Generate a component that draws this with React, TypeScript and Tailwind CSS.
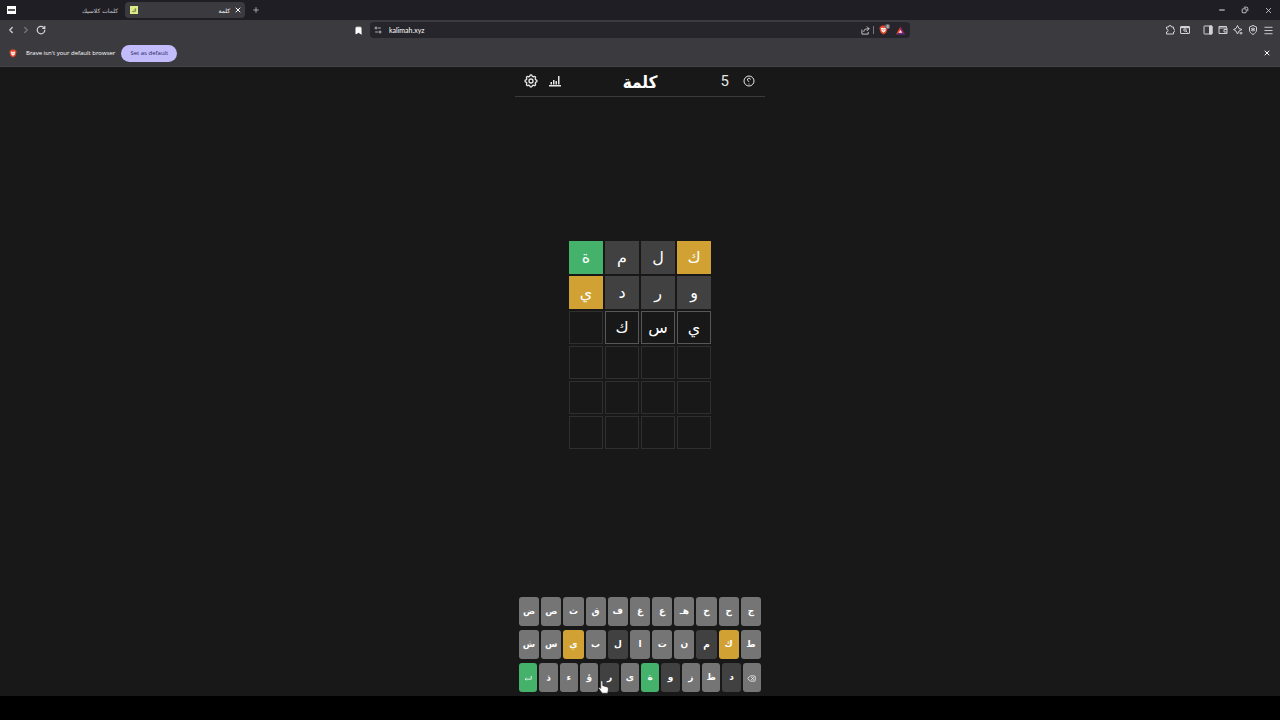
import { ReactNode } from "react";
import {
  Bookmark,
  ChevronLeft,
  ChevronRight,
  Delete,
  Menu,
  Minus,
  Plus,
  RotateCw,
  X,
} from "lucide-react";
import { HiOutlineCog } from "react-icons/hi";

type Status = "correct" | "present" | "absent" | "typed" | "empty";

interface Letter {
  char: string;
  status: Status;
}

const tileColors: Record<Status, string> = {
  correct: "bg-[#44b26b]",
  present: "bg-[#d1a233]",
  absent: "bg-[#414142]",
  typed: "border border-[#565758]",
  empty: "border border-[#2f2f30]",
};

// Rows are listed in reading order, the board itself is rtl
const guesses: Letter[][] = [
  [
    { char: "ك", status: "present" },
    { char: "ل", status: "absent" },
    { char: "م", status: "absent" },
    { char: "ة", status: "correct" },
  ],
  [
    { char: "و", status: "absent" },
    { char: "ر", status: "absent" },
    { char: "د", status: "absent" },
    { char: "ي", status: "present" },
  ],
  [
    { char: "ي", status: "typed" },
    { char: "س", status: "typed" },
    { char: "ك", status: "typed" },
    { char: "", status: "empty" },
  ],
];

const emptyRow: Letter[] = Array.from({ length: 4 }, () => ({ char: "", status: "empty" }));
const board = [...guesses, emptyRow, emptyRow, emptyRow];

const keyRows = [
  ["ج", "ح", "خ", "هـ", "ع", "غ", "ف", "ق", "ث", "ص", "ض"],
  ["ط", "ك", "م", "ن", "ت", "ا", "ل", "ب", "ي", "س", "ش"],
  ["delete", "د", "ظ", "ز", "و", "ة", "ى", "ر", "ؤ", "ء", "ذ", "enter"],
];

const keyColors: Record<string, string> = {
  "ك": "bg-[#d1a233]",
  "ي": "bg-[#d1a233]",
  "ة": "bg-[#44b26b]",
  enter: "bg-[#44b26b]",
  "م": "bg-[#414142]",
  "ل": "bg-[#414142]",
  "د": "bg-[#414142]",
  "و": "bg-[#414142]",
  "ر": "bg-[#414142]",
};

function IconButton({ label, className = "", children }: { label: string; className?: string; children: ReactNode }) {
  return (
    <button type="button" aria-label={label} className={`flex shrink-0 items-center justify-center ${className}`}>
      {children}
    </button>
  );
}

function LineIcon({ className = "size-[10px]", children }: { className?: string; children: ReactNode }) {
  return (
    <svg viewBox="0 0 20 20" className={className} fill="none" stroke="currentColor" strokeWidth="2" aria-hidden="true">
      {children}
    </svg>
  );
}

function BraveLogo({ className }: { className: string }) {
  return (
    <svg viewBox="0 0 20 22" className={className} aria-hidden="true">
      <path d="M6 1h8l2 2 2 1 1 4-3 9-6 4-6-4L1 8l1-4 2-1z" fill="#e8472b" />
      <path d="M4 7l3-1 3 1 3-1 3 1-2 4 1 2-3 2-2 2-2-2-3-2 1-2z" fill="#fff" />
      <path d="M7 9l2 1M13 9l-2 1M10 10v3" stroke="#e8472b" strokeWidth="1.2" />
    </svg>
  );
}

function TabStrip() {
  return (
    <header className="flex h-5 items-center bg-[#1f1e24] text-[#c8c8cc]">
      <div className="flex w-[125px] items-center justify-between pr-[7px] pl-[7px]">
        <span className="flex h-2 w-[9px] items-center justify-center bg-white">
          <span className="h-[2px] w-[7px] bg-[#555]" />
        </span>
        <span dir="rtl" className="text-[6px]">كلمات كلاسيك</span>
      </div>
      <div className="flex h-4 w-[120px] items-center rounded bg-[#3b3a3f] pr-[3px] pl-[5px] text-white">
        <span className="flex size-2 items-center justify-center bg-[#dfeb8b] text-[5px] leading-none font-bold text-[#54702a]">ك</span>
        <span dir="rtl" className="ml-auto text-[6px]">كلمة</span>
        <IconButton label="Close tab" className="ml-1">
          <X size={8} strokeWidth={3} />
        </IconButton>
      </div>
      <IconButton label="New tab" className="ml-[7px] text-[#a5a5aa]">
        <Plus size={8} strokeWidth={3} />
      </IconButton>
      <div className="ml-auto flex items-center gap-[15px] pr-[7px] text-[#e6e6e8]">
        <IconButton label="Minimize">
          <Minus size={8} strokeWidth={3} />
        </IconButton>
        <IconButton label="Restore">
          <LineIcon className="size-2">
            <rect x="3" y="7" width="10" height="10" rx="2" />
            <path d="M7 3h7a3 3 0 0 1 3 3v7" />
          </LineIcon>
        </IconButton>
        <IconButton label="Close window">
          <X size={9} />
        </IconButton>
      </div>
    </header>
  );
}

function Toolbar() {
  return (
    <div className="flex h-5 items-center bg-[#3b3a3f] pr-[6px] pl-[6px] text-[#d2d2d5]">
      <div className="flex flex-1 items-center gap-[5px]">
        <IconButton label="Back">
          <ChevronLeft size={10} strokeWidth={3} />
        </IconButton>
        <IconButton label="Forward" className="text-[#77767c]">
          <ChevronRight size={10} strokeWidth={3} />
        </IconButton>
        <IconButton label="Reload">
          <RotateCw size={10} strokeWidth={3} />
        </IconButton>
        <IconButton label="Bookmark" className="mr-[7px] ml-auto text-white">
          <Bookmark size={9} fill="currentColor" />
        </IconButton>
      </div>
      <div className="flex h-4 w-[540px] items-center rounded bg-[#26252b] pr-[5px] pl-1">
        <LineIcon className="size-2">
          <circle cx="5" cy="5" r="2.500" />
          <path d="M10 5h7M3 15h7" />
          <circle cx="15" cy="15" r="2.500" />
        </LineIcon>
        <input
          aria-label="Address"
          defaultValue="kalimah.xyz"
          className="ml-[7px] min-w-0 flex-1 bg-transparent font-[Lato,sans-serif] text-[7px] text-white outline-none"
        />
        <IconButton label="Share">
          <LineIcon className="size-[9px]">
            <path d="M2 8v10h14v-5M6 13c0-5 4-7 12-7M13 1l5 5-5 5" />
          </LineIcon>
        </IconButton>
        <span className="mr-[5px] ml-[3px] h-2 w-px bg-[#77767c]" />
        <IconButton label="Brave shields" className="relative">
          <BraveLogo className="h-[10px] w-[9px]" />
          <span className="absolute -top-px -right-[2px] size-[5px] rounded-xs bg-[#66656b] text-center text-[4px] leading-[5px] text-white">4</span>
        </IconButton>
        <IconButton label="Brave rewards" className="ml-2">
          <svg viewBox="0 0 16 14" className="size-[9px]">
            <path d="M8 0L0 14l8-4z" fill="#ff4724" />
            <path d="M8 0l8 14-8-4z" fill="#9e1f63" />
            <path d="M0 14l8-4 8 4z" fill="#662d91" />
            <path d="M8 6l3 5H5z" fill="#fff" />
          </svg>
        </IconButton>
      </div>
      <div className="flex flex-1 items-center justify-end gap-[5px]">
        <IconButton label="Extensions">
          <LineIcon>
            <path d="M3 4h4a3 3 0 0 1 6 0h4v4a3 3 0 0 1 0 6v4H3v-4a3 3 0 0 0 0-6z" />
          </LineIcon>
        </IconButton>
        <IconButton label="Search tabs" className="mr-2">
          <LineIcon>
            <rect x="1" y="3" width="18" height="14" rx="1" />
            <path d="M1 5h18" strokeWidth="3" />
            <circle cx="10" cy="10" r="2.500" />
            <path d="M12 12l3 3" />
          </LineIcon>
        </IconButton>
        <IconButton label="Side panel">
          <LineIcon>
            <rect x="2" y="2" width="16" height="16" rx="1" />
            <path d="M13 2h5v16h-5z" fill="currentColor" />
          </LineIcon>
        </IconButton>
        <IconButton label="Wallet">
          <LineIcon>
            <path d="M17 6V3H2v14h16V6H2M18 9h-6v5h6" />
          </LineIcon>
        </IconButton>
        <IconButton label="Leo">
          <LineIcon>
            <path d="M9 1l3 6 6 2-6 3-3 6-3-6-5-3 5-2z" />
            <path d="M16 14v5M13 16h6" />
          </LineIcon>
        </IconButton>
        <IconButton label="VPN">
          <LineIcon>
            <path d="M10 1l7 3v6c0 4-3 7-7 9-4-2-7-5-7-9V4z" />
            <path d="M10 5v8M6 7l8 4M14 7l-8 4" />
          </LineIcon>
        </IconButton>
        <IconButton label="Menu">
          <Menu size={11} />
        </IconButton>
      </div>
    </div>
  );
}

function DefaultBrowserBar() {
  return (
    <div className="flex h-[27px] items-center border-b border-[#434247] bg-[#3b3a3f] pr-[9px] pl-[9px]">
      <BraveLogo className="h-[9px] w-2" />
      <p className="ml-[9px] font-['Open_Sans',sans-serif] text-[6px] font-medium text-white">Brave isn't your default browser</p>
      <button type="button" className="ml-[6px] h-[17px] w-14 rounded-full bg-[#c2bcfb] font-['Open_Sans',sans-serif] text-[6px] font-medium text-[#2b2863]">
        Set as default
      </button>
      <IconButton label="Dismiss" className="ml-auto text-white">
        <X size={8} strokeWidth={3} />
      </IconButton>
    </div>
  );
}

function GameHeader() {
  return (
    <div className="grid w-full grid-cols-3 items-center border-b border-[#3a3a3c] px-2">
      <div className="flex items-center gap-[10px] pb-[2px] text-[#e6e6e6]">
        <IconButton label="Settings">
          <HiOutlineCog size={16} />
        </IconButton>
        <IconButton label="Statistics">
          <svg viewBox="0 0 24 24" className="size-3" fill="currentColor">
            <path d="M0 20h24v3H0zM3 14h3v5H3zM8 10h3v9H8zM13 12h3v7h-3zM18 2h3v17h-3z" />
          </svg>
        </IconButton>
      </div>
      <h1 dir="rtl" className="pt-[2px] text-center font-['DejaVu_Sans_Condensed','DejaVu_Sans',sans-serif] text-[17px] leading-[27px] font-bold text-white">
        كلمة
      </h1>
      <div className="flex items-center justify-end gap-[14px] pr-[2px] pb-[2px] text-[#e6e6e6]">
        <span className="font-[Roboto,sans-serif] text-[15px] leading-5">5</span>
        <IconButton label="Help">
          <svg viewBox="0 0 24 24" className="size-3" fill="none" stroke="currentColor" strokeWidth="2">
            <circle cx="12" cy="12" r="10" />
            <path d="M15 9a3 3 0 0 0-6 1c0 2 3 2 3 4M12 17v2" />
          </svg>
        </IconButton>
      </div>
    </div>
  );
}

function KeyLabel({ value }: { value: string }) {
  if (value === "delete") {
    return <Delete size={9} />;
  }
  if (value === "enter") {
    return (
      <LineIcon className="size-2">
        <path d="M18 5v8H3M6 10l-3 3 3 3" />
      </LineIcon>
    );
  }
  return value;
}

function Keyboard() {
  return (
    <div dir="rtl" className="flex w-[242px] flex-col gap-1">
      {keyRows.map((row, i) => (
        <div key={i} className="flex h-[29px] gap-[2px]">
          {row.map((key) => (
            <button
              key={key}
              type="button"
              aria-label={key}
              className={`flex min-w-0 flex-1 items-center justify-center rounded-[3px] pt-px text-[9px] font-bold text-white ${keyColors[key] ?? "bg-[#757576]"}`}
            >
              <KeyLabel value={key} />
            </button>
          ))}
        </div>
      ))}
    </div>
  );
}

export default function App() {
  return (
    <div className="flex min-h-screen flex-col bg-[#181818] font-['DejaVu_Sans',sans-serif]">
      <TabStrip />
      <Toolbar />
      <DefaultBrowserBar />
      <main className="relative mx-auto flex w-full max-w-[250px] flex-1 flex-col items-center">
        <GameHeader />
        <div className="flex flex-1 items-center pb-1">
          <div dir="rtl" className="grid grid-cols-4 gap-[2px]">
            {board.flat().map((tile, i) => (
              <div key={i} className={`flex h-[33px] w-[34px] items-center justify-center pt-px text-base text-white ${tileColors[tile.status]}`}>
                {tile.char}
              </div>
            ))}
          </div>
        </div>
        <Keyboard />
        <svg viewBox="0 0 16 20" className="absolute -bottom-[2px] left-[83px] h-[14px] w-[11px]" aria-hidden="true">
          <path d="M5 1c2 0 2 1 2 3v4l7 2c2 1 1 6 0 9H6L1 12c0-2 2-1 3 0V3c0-1 0-2 1-2z" fill="#fff" stroke="#222" />
        </svg>
      </main>
      <footer className="mt-1 h-6 bg-black" />
    </div>
  );
}
